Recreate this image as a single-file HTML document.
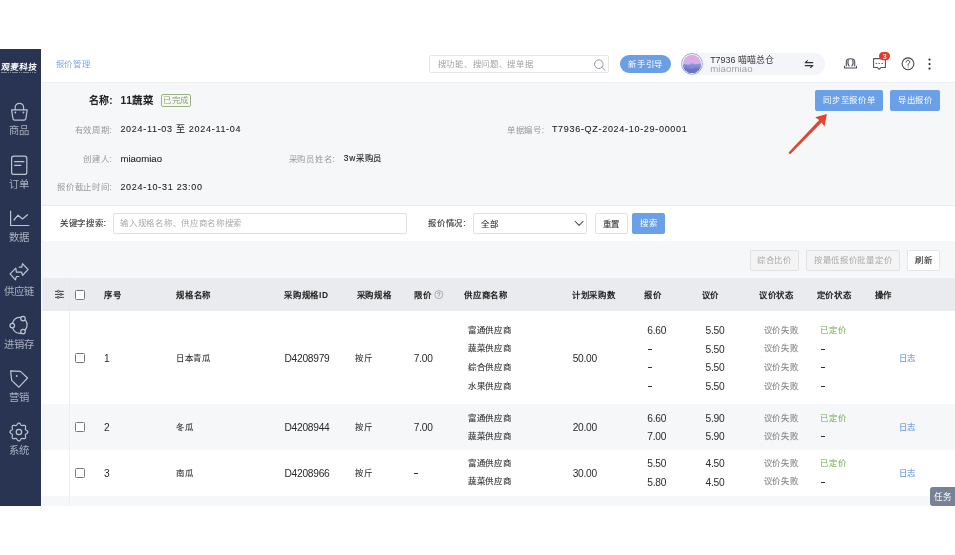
<!DOCTYPE html>
<html lang="zh-CN">
<head>
<meta charset="utf-8">
<style>
*{box-sizing:border-box;margin:0;padding:0}
html,body{width:955px;height:555px;overflow:hidden;background:#fff;font-family:"Liberation Sans",sans-serif;}
#w{position:absolute;left:0;top:0;width:955px;height:555px;will-change:transform;background:#fff}
.a{position:absolute}
.t{position:absolute;white-space:nowrap;line-height:12px;font-size:8.4px;letter-spacing:.7px;color:#333;-webkit-text-stroke:.12px}
.n{font-size:10.2px;letter-spacing:-.25px;padding-top:1.3px;-webkit-text-stroke:0;color:#2a2a2a}
.side{left:0;top:49px;width:41px;height:457px;background:#283452}
.slab{position:absolute;left:-1.4px;width:41px;text-align:center;font-size:10.3px;line-height:12px;color:#abb2bf;white-space:nowrap}
.hdr{left:41px;top:49px;width:914px;height:32px;background:#fff}
.content{left:41px;top:81.6px;width:914px;height:424.4px;background:#f6f7f9;border-top:1px solid #eff0f3}
.btnb{position:absolute;background:#6aa0e8;border-radius:2px;color:#fff;font-size:8.4px;letter-spacing:.7px;text-indent:.7px;line-height:12px;text-align:center;white-space:nowrap}
.box{position:absolute;background:#fff;border:1px solid #e0e3e8;border-radius:2px}
.lbl{color:#999;-webkit-text-stroke:0}
.th{font-weight:bold;color:#222;-webkit-text-stroke:0}
.cb{position:absolute;width:10.2px;height:10px;border:1px solid #75787e;border-radius:1.5px;background:#fff}
.gray{color:#888}
.green{color:#84b968}
.blue{color:#6b9cdc}
</style>
</head>
<body>
<div id="w">
<!-- sidebar -->
<div class="a side"></div>
<div class="t" style="left:1.2px;top:60.8px;font-size:8.5px;font-weight:bold;color:#fff;letter-spacing:.1px;transform:skewX(-6deg);-webkit-text-stroke:0">观麦科技</div>
<div class="a" style="left:0.5px;top:71.6px;width:35.5px;height:1.3px;background:repeating-linear-gradient(90deg,#9aa3b8 0 1.6px,transparent 1.6px 2.2px);opacity:.75"></div>

<svg class="a" style="left:0;top:49px" width="41" height="457" viewBox="0 49 41 457" fill="none" stroke="#bdc4d0" stroke-width="1.2" stroke-linecap="round" stroke-linejoin="round">
  <!-- bag -->
  <path d="M15.2 109.5 V107.5 a4.2 4.2 0 0 1 8.4 0 V109.5"/>
  <path d="M11.6 109.8 H27.2 L25.9 118.4 Q25.7 120.2 24 120.2 H14.8 Q13.1 120.2 12.9 118.4 Z"/>
  <circle cx="15.3" cy="112.5" r="0.9" fill="#bdc4d0" stroke="none"/>
  <circle cx="23.5" cy="112.5" r="0.9" fill="#bdc4d0" stroke="none"/>
  <!-- doc -->
  <rect x="11.6" y="156.2" width="15.2" height="18.2" rx="2.2"/>
  <path d="M14.6 161.6 H24 M14.6 165.4 H20.8"/>
  <!-- chart -->
  <path d="M10.6 211.2 V225.5 H28.8"/>
  <path d="M14 220 L18 215.2 L22.5 219 L27.5 214.7"/>
  <!-- arrows -->
  <path d="M19.2 267.1 H21.8 L22.5 263.6 L28 269.5 L22.6 275.3 L21.6 272.2 H16.4 L15.8 268.2 L10.1 273.9 L15.4 279.9 L16.4 276.5 H18.8"/>
  <!-- cycle -->
  <path d="M20.8 317.4 A8 8 0 0 0 12.6 322.8"/>
  <path d="M12.8 328.4 A8 8 0 0 0 20.8 333.4"/>
  <path d="M25.2 329.8 A8 8 0 0 0 25.6 320.4"/>
  <circle cx="23" cy="318.6" r="2.3"/>
  <circle cx="12.3" cy="325.6" r="2.3"/>
  <circle cx="23" cy="331.6" r="2.3"/>
  <!-- tag -->
  <path d="M10.6 370.8 L20.4 371.4 L27.6 378 L18.9 387.2 L11.7 380.4 Z"/>
  <circle cx="16.7" cy="376" r="0.9" fill="#bdc4d0" stroke="none"/>
  <!-- gear -->
  <path d="M18.90 423.05 L19.25 423.10 L19.59 423.26 L19.91 423.50 L20.20 423.81 L20.46 424.15 L20.70 424.51 L20.92 424.84 L21.13 425.12 L21.36 425.34 L21.60 425.49 L21.87 425.56 L22.18 425.56 L22.54 425.51 L22.93 425.43 L23.34 425.35 L23.77 425.29 L24.20 425.28 L24.59 425.33 L24.94 425.46 L25.23 425.67 L25.44 425.96 L25.57 426.31 L25.62 426.70 L25.61 427.13 L25.55 427.56 L25.47 427.97 L25.39 428.36 L25.34 428.72 L25.34 429.03 L25.41 429.30 L25.56 429.54 L25.78 429.77 L26.06 429.98 L26.39 430.20 L26.75 430.44 L27.09 430.70 L27.40 430.99 L27.64 431.31 L27.80 431.65 L27.85 432.00 L27.80 432.35 L27.64 432.69 L27.40 433.01 L27.09 433.30 L26.75 433.56 L26.39 433.80 L26.06 434.02 L25.78 434.23 L25.56 434.46 L25.41 434.70 L25.34 434.97 L25.34 435.28 L25.39 435.64 L25.47 436.03 L25.55 436.44 L25.61 436.87 L25.62 437.30 L25.57 437.69 L25.44 438.04 L25.23 438.33 L24.94 438.54 L24.59 438.67 L24.20 438.72 L23.77 438.71 L23.34 438.65 L22.93 438.57 L22.54 438.49 L22.18 438.44 L21.87 438.44 L21.60 438.51 L21.36 438.66 L21.13 438.88 L20.92 439.16 L20.70 439.49 L20.46 439.85 L20.20 440.19 L19.91 440.50 L19.59 440.74 L19.25 440.90 L18.90 440.95 L18.55 440.90 L18.21 440.74 L17.89 440.50 L17.60 440.19 L17.34 439.85 L17.10 439.49 L16.88 439.16 L16.67 438.88 L16.44 438.66 L16.20 438.51 L15.93 438.44 L15.62 438.44 L15.26 438.49 L14.87 438.57 L14.46 438.65 L14.03 438.71 L13.60 438.72 L13.21 438.67 L12.86 438.54 L12.57 438.33 L12.36 438.04 L12.23 437.69 L12.18 437.30 L12.19 436.87 L12.25 436.44 L12.33 436.03 L12.41 435.64 L12.46 435.28 L12.46 434.97 L12.39 434.70 L12.24 434.46 L12.02 434.23 L11.74 434.02 L11.41 433.80 L11.05 433.56 L10.71 433.30 L10.40 433.01 L10.16 432.69 L10.00 432.35 L9.95 432.00 L10.00 431.65 L10.16 431.31 L10.40 430.99 L10.71 430.70 L11.05 430.44 L11.41 430.20 L11.74 429.98 L12.02 429.77 L12.24 429.54 L12.39 429.30 L12.46 429.03 L12.46 428.72 L12.41 428.36 L12.33 427.97 L12.25 427.56 L12.19 427.13 L12.18 426.70 L12.23 426.31 L12.36 425.96 L12.57 425.67 L12.86 425.46 L13.21 425.33 L13.60 425.28 L14.03 425.29 L14.46 425.35 L14.87 425.43 L15.26 425.51 L15.62 425.56 L15.93 425.56 L16.20 425.49 L16.44 425.34 L16.67 425.12 L16.88 424.84 L17.10 424.51 L17.34 424.15 L17.60 423.81 L17.89 423.50 L18.21 423.26 L18.55 423.10 Z"/>
  <circle cx="18.9" cy="432" r="2.7"/>
</svg>
<div class="slab" style="top:125.2px">商品</div>
<div class="slab" style="top:178.6px">订单</div>
<div class="slab" style="top:231.8px">数据</div>
<div class="slab" style="top:285.6px">供应链</div>
<div class="slab" style="top:338.9px">进销存</div>
<div class="slab" style="top:392.2px">营销</div>
<div class="slab" style="top:445.4px">系统</div>

<!-- header -->
<div class="a hdr"></div>
<div class="t" style="left:55.5px;top:58px;color:#7da8e4;-webkit-text-stroke:0">报价管理</div>
<div class="box" style="left:429px;top:55px;width:180px;height:18px;border-color:#e4e6ea"></div>
<div class="t" style="left:437.8px;top:58.3px;color:#a3a3a3;-webkit-text-stroke:0">搜功能、搜问题、搜单据</div>
<svg class="a" style="left:592px;top:57px" width="16" height="15" viewBox="0 0 16 15" fill="none" stroke="#8d9097" stroke-width=".95"><circle cx="6.8" cy="7.2" r="4.3"/><path d="M9.9 10.3 L13.2 13.4" stroke-linecap="round"/></svg>
<div class="btnb" style="left:620px;top:55px;width:50.5px;height:18px;border-radius:9px;line-height:18px;background:#6b9fe5">新手引导</div>
<div class="a" style="left:688px;top:52.7px;width:137px;height:22px;border-radius:11px;background:#f4f5f8"></div>
<svg class="a" style="left:660px;top:45px" width="295" height="35" viewBox="660 45 295 35">
  <defs>
    <linearGradient id="sky" x1="0" y1="0" x2="0" y2="1">
      <stop offset="0" stop-color="#e3a6dc"/><stop offset=".35" stop-color="#dcaee6"/><stop offset=".5" stop-color="#c7b4ea"/><stop offset=".62" stop-color="#8f96d8"/><stop offset="1" stop-color="#6a74c0"/>
    </linearGradient>
    <clipPath id="avc"><circle cx="692" cy="63.9" r="9.2"/></clipPath>
  </defs>
  <circle cx="692" cy="63.9" r="10.4" fill="#fff" stroke="#8ea6e2" stroke-width="1"/>
  <circle cx="692" cy="63.9" r="9.2" fill="url(#sky)"/>
  <path clip-path="url(#avc)" d="M681 65.5 L685 64 L688 65 L692 63.2 L696 64.6 L700 63.5 L703 64.8 V75 H681 Z" fill="#7d86cf" opacity=".65"/>
  <path clip-path="url(#avc)" d="M681 69 L686 67.5 L691 69 L696 67.6 L703 69.5 V75 H681 Z" fill="#5f6abb" opacity=".55"/>
  <!-- swap -->
  <g fill="none" stroke="#333" stroke-width="1.1" stroke-linecap="round" stroke-linejoin="round">
    <path d="M805.2 62.6 H812.8 M805.2 62.6 L807.4 60.7"/>
    <path d="M812.8 65.6 H805.2 M812.8 65.6 L810.6 67.5"/>
  </g>
  <!-- people -->
  <g fill="none" stroke="#4a4e56" stroke-width="1.05" stroke-linecap="round" stroke-linejoin="round">
    <path d="M846.3 66 V61.4 C846.3 59.6 848 58.7 850.5 58.7 C853 58.7 854.7 59.6 854.7 61.4 V66"/>
    <path d="M848.3 59.8 C847.6 62 847.9 64.6 849.1 66 M852.7 59.8 C853.4 62 853.1 64.6 851.9 66"/>
    <path d="M844.5 66.3 V68 H856.5 V66.3"/>
  </g>
  <!-- message -->
  <g fill="none" stroke="#50545c" stroke-width="1.05" stroke-linejoin="round">
    <path d="M873.6 58.6 H885.4 V67.4 H881.2 L879.2 69.3 L877.2 67.4 H873.6 Z"/>
  </g>
  <g fill="#50545c"><rect x="875.6" y="62.9" width="1.6" height=".9"/><rect x="878.5" y="62.9" width="1.6" height=".9"/><rect x="881.4" y="62.9" width="1.6" height=".9"/></g>
  <rect x="879" y="51.9" width="11" height="8.3" rx="4.15" fill="#e5392b"/>
  <text x="884.5" y="58.9" font-size="7.6" fill="#fff" text-anchor="middle" font-family="Liberation Sans">3</text>
  <!-- help -->
  <circle cx="908" cy="63.8" r="5.9" fill="none" stroke="#3c3f45" stroke-width="1.05"/>
  <path d="M906.2 62.1 C906.2 60.9 907 60.3 908 60.3 C909.1 60.3 909.8 61 909.8 61.9 C909.8 63.2 908.1 63.3 908.1 64.8 V65.3" fill="none" stroke="#3c3f45" stroke-width="1" stroke-linecap="round"/>
  <circle cx="908.1" cy="67" r=".55" fill="#3c3f45"/>
  <!-- kebab -->
  <g fill="#2a2d33"><circle cx="929.5" cy="59.5" r="1.1"/><circle cx="929.5" cy="64.1" r="1.1"/><circle cx="929.5" cy="68.6" r="1.1"/></g>
</svg>

<div class="t" style="left:710.2px;top:54.4px;font-size:8.9px;letter-spacing:0;color:#333;-webkit-text-stroke:0">T7936 喵喵总仓</div>
<div class="t" style="left:710.2px;top:62.5px;font-size:9.6px;letter-spacing:.1px;color:#a3a3a3;-webkit-text-stroke:0">miaomiao</div>
<!-- content -->
<div class="a content"></div>
<div class="a" style="left:41px;top:81px;width:1px;height:425px;background:#fff"></div>

<!-- info -->
<div class="t" style="left:60px;width:52.5px;text-align:right;top:94.5px;font-size:10px;letter-spacing:0;font-weight:bold;color:#222;-webkit-text-stroke:0">名称:</div>
<div class="t" style="left:120.5px;top:94.5px;font-size:10.3px;letter-spacing:.5px;font-weight:bold;color:#222;-webkit-text-stroke:0">11蔬菜</div>
<div class="a" style="left:160.6px;top:94.4px;width:30px;height:12.2px;border:1px solid #9bb08a;background:#f5f9f0;border-radius:2px"></div>
<div class="t" style="left:163px;top:94.4px;color:#8aa079;-webkit-text-stroke:0">已完成</div>

<div class="t lbl" style="left:40px;width:72.6px;text-align:right;top:123.5px">有效周期:</div>
<div class="t" style="left:120.4px;top:122.6px;font-size:9px;letter-spacing:.7px;color:#222;-webkit-text-stroke:.08px">2024-11-03 至 2024-11-04</div>
<div class="t lbl" style="left:40px;width:72.6px;text-align:right;top:152.5px">创建人:</div>
<div class="t" style="left:120.4px;top:152.5px;font-size:9.6px;letter-spacing:0;color:#222;-webkit-text-stroke:.08px">miaomiao</div>
<div class="t lbl" style="left:40px;width:72.6px;text-align:right;top:181.3px">报价截止时间:</div>
<div class="t" style="left:120.4px;top:180.8px;font-size:9px;letter-spacing:.7px;color:#222;-webkit-text-stroke:.08px">2024-10-31 23:00</div>

<div class="t lbl" style="left:260px;width:75.3px;text-align:right;top:152.5px">采购员姓名:</div>
<div class="t" style="left:343.8px;top:152.3px;color:#222">3w采购员</div>
<div class="t lbl" style="left:480px;width:64.8px;text-align:right;top:123.5px">单据编号:</div>
<div class="t" style="left:551.9px;top:122.6px;font-size:9px;letter-spacing:.7px;color:#222;-webkit-text-stroke:.08px">T7936-QZ-2024-10-29-00001</div>

<div class="btnb" style="left:815.2px;top:89.7px;width:67.4px;height:21.1px;line-height:21px">同步至报价单</div>
<div class="btnb" style="left:890px;top:89.7px;width:50px;height:21.1px;line-height:21px">导出报价</div>

<svg class="a" style="left:780px;top:105px" width="60" height="55" viewBox="780 105 60 55">
  <path d="M788.6 152.4 L819.2 120.0 L815.2 117.3 L826.9 113.9 L824.5 126.4 L821.6 122.4 L790.4 154.0 Q789.2 154.2 788.6 152.4 Z" fill="#e5432c"/>
</svg>

<!-- search section -->
<div class="a" style="left:42px;top:204.6px;width:913px;height:36.8px;background:#fff;border-top:1px solid #eaecf0"></div>
<div class="t" style="left:60px;top:217px;color:#333">关键字搜索:</div>
<div class="box" style="left:113.2px;top:213.2px;width:294.2px;height:21px;border-color:#dfe2e7"></div>
<div class="t" style="left:120.4px;top:217.2px;color:#a8a8a8;-webkit-text-stroke:0">输入规格名称、供应商名称搜索</div>
<div class="t" style="left:428.4px;top:217px;color:#333">报价情况:</div>
<div class="box" style="left:472.7px;top:213.2px;width:114.7px;height:21px;border-color:#dfe2e7"></div>
<div class="t" style="left:480.9px;top:217.7px;color:#333">全部</div>
<svg class="a" style="left:573px;top:219px" width="12" height="9" viewBox="0 0 12 9" fill="none" stroke="#555" stroke-width="1.1" stroke-linecap="round" stroke-linejoin="round"><path d="M2.2 2.4 L6.1 6.4 L10 2.4"/></svg>
<div class="box" style="left:595.2px;top:213.2px;width:32.6px;height:21px;border-color:#dfe2e7"></div>
<div class="t" style="left:595.2px;width:32.6px;text-align:center;top:217.5px;color:#333">重置</div>
<div class="btnb" style="left:631.9px;top:213.2px;width:32.7px;height:20.8px;line-height:21px">搜索</div>

<!-- actions -->
<div class="box" style="left:749.5px;top:249.5px;width:49.5px;height:21px;background:#f4f4f5;border-color:#e2e2e4"></div>
<div class="t" style="left:749.5px;width:49.5px;text-align:center;top:254px;color:#a9a9a9;-webkit-text-stroke:0">综合比价</div>
<div class="box" style="left:806.4px;top:249.5px;width:93.5px;height:21px;background:#f4f4f5;border-color:#e2e2e4"></div>
<div class="t" style="left:806.4px;width:93.5px;text-align:center;top:254px;color:#a9a9a9;-webkit-text-stroke:0">按最低报价批量定价</div>
<div class="box" style="left:907.3px;top:249.5px;width:32.7px;height:21px;border-color:#e6e6e8"></div>
<div class="t" style="left:907.3px;width:32.7px;text-align:center;top:254px;color:#333">刷新</div>

<!-- table header -->
<div class="a" style="left:42px;top:278.3px;width:913px;height:33px;background:#e9ebef"></div>
<svg class="a" style="left:54px;top:289px" width="11" height="11" viewBox="0 0 11 11" fill="none" stroke="#3a3d42" stroke-width="1"><path d="M1 2.4 H9.8 M1 5.4 H9.8 M1 8.4 H9.8"/><circle cx="4.4" cy="2.4" r="1" fill="#fff"/><circle cx="6.9" cy="5.4" r="1" fill="#fff"/><circle cx="4.2" cy="8.4" r="1" fill="#fff"/></svg>
<div class="a" style="left:69px;top:278.3px;width:1px;height:227.7px;background:#e6e8ec"></div>
<div class="cb" style="left:75.1px;top:289.8px"></div>
<div class="t th" style="left:104.2px;top:289px">序号</div>
<div class="t th" style="left:176.4px;top:289px">规格名称</div>
<div class="t th" style="left:284.2px;top:289px">采购规格ID</div>
<div class="t th" style="left:356.5px;top:289px">采购规格</div>
<div class="t th" style="left:414px;top:289px">限价</div>
<svg class="a" style="left:434px;top:290px" width="10" height="10" viewBox="0 0 10 10" fill="none" stroke="#9a9a9a" stroke-width=".8"><circle cx="4.8" cy="4.6" r="4"/><path d="M3.6 3.7 C3.6 2.9 4.2 2.5 4.8 2.5 C5.5 2.5 6 3 6 3.6 C6 4.4 4.9 4.5 4.9 5.5" stroke-linecap="round" stroke-width=".9" stroke="#8a8a8a"/><circle cx="4.9" cy="6.8" r=".45" fill="#8a8a8a" stroke="none"/></svg>
<div class="t th" style="left:464.2px;top:289px">供应商名称</div>
<div class="t th" style="left:572px;top:289px">计划采购数</div>
<div class="t th" style="left:644.3px;top:289px">报价</div>
<div class="t th" style="left:701.6px;top:289px">议价</div>
<div class="t th" style="left:759.1px;top:289px">议价状态</div>
<div class="t th" style="left:816.6px;top:289px">定价状态</div>
<div class="t th" style="left:874.7px;top:289px">操作</div>

<!-- rows -->
<div class="a" style="left:42px;top:311.3px;width:913px;height:92.4px;background:#fff"></div>
<div class="a" style="left:42px;top:403.7px;width:913px;height:45.8px;background:#f6f7f9"></div>
<div class="a" style="left:42px;top:449.5px;width:913px;height:46.5px;background:#fff"></div>
<div class="a" style="left:42px;top:496px;width:913px;height:10px;background:#f6f7f9"></div>
<div class="a" style="left:69px;top:311.3px;width:1px;height:194.7px;background:#eceef1"></div>

<div id="rows">
<div class="cb" style="left:75.1px;top:352.5px"></div>
<div class="t n" style="left:104px;top:351.5px;">1</div>
<div class="t " style="left:175.9px;top:351.5px;">日本青瓜</div>
<div class="t n" style="left:284.5px;top:351.5px;">D4208979</div>
<div class="t " style="left:355.3px;top:351.5px;">按斤</div>
<div class="t n" style="left:413.8px;top:351.5px;">7.00</div>
<div class="t n" style="left:572.7px;top:351.5px;">50.00</div>
<div class="t blue" style="left:898.7px;top:351.5px;">日志</div>
<div class="t " style="left:468px;top:323.5px;">富通供应商</div>
<div class="t n" style="left:647.3px;top:323.5px;">6.60</div>
<div class="t n" style="left:705.5px;top:323.5px;">5.50</div>
<div class="t gray" style="left:763.6px;top:323.5px;">议价失败</div>
<div class="t green" style="left:820.3px;top:323.5px;">已定价</div>
<div class="t " style="left:468px;top:342.3px;">蔬菜供应商</div>
<div class="a" style="left:647.6px;top:348.7px;width:4.4px;height:1.1px;background:#333"></div>
<div class="t n" style="left:705.5px;top:342.3px;">5.50</div>
<div class="t gray" style="left:763.6px;top:342.3px;">议价失败</div>
<div class="a" style="left:820.6px;top:348.7px;width:4.4px;height:1.1px;background:#333"></div>
<div class="t " style="left:468px;top:361.0px;">综合供应商</div>
<div class="a" style="left:647.6px;top:367.4px;width:4.4px;height:1.1px;background:#333"></div>
<div class="t n" style="left:705.5px;top:361.0px;">5.50</div>
<div class="t gray" style="left:763.6px;top:361.0px;">议价失败</div>
<div class="a" style="left:820.6px;top:367.4px;width:4.4px;height:1.1px;background:#333"></div>
<div class="t " style="left:468px;top:379.5px;">水果供应商</div>
<div class="a" style="left:647.6px;top:385.9px;width:4.4px;height:1.1px;background:#333"></div>
<div class="t n" style="left:705.5px;top:379.5px;">5.50</div>
<div class="t gray" style="left:763.6px;top:379.5px;">议价失败</div>
<div class="a" style="left:820.6px;top:385.9px;width:4.4px;height:1.1px;background:#333"></div>
<div class="cb" style="left:75.1px;top:421.7px"></div>
<div class="t n" style="left:104px;top:420.7px;">2</div>
<div class="t " style="left:175.9px;top:420.7px;">冬瓜</div>
<div class="t n" style="left:284.5px;top:420.7px;">D4208944</div>
<div class="t " style="left:355.3px;top:420.7px;">按斤</div>
<div class="t n" style="left:413.8px;top:420.7px;">7.00</div>
<div class="t n" style="left:572.7px;top:420.7px;">20.00</div>
<div class="t blue" style="left:898.7px;top:420.7px;">日志</div>
<div class="t " style="left:468px;top:411.6px;">富通供应商</div>
<div class="t n" style="left:647.3px;top:411.6px;">6.60</div>
<div class="t n" style="left:705.5px;top:411.6px;">5.90</div>
<div class="t gray" style="left:763.6px;top:411.6px;">议价失败</div>
<div class="t green" style="left:820.3px;top:411.6px;">已定价</div>
<div class="t " style="left:468px;top:429.8px;">蔬菜供应商</div>
<div class="t n" style="left:647.3px;top:429.8px;">7.00</div>
<div class="t n" style="left:705.5px;top:429.8px;">5.90</div>
<div class="t gray" style="left:763.6px;top:429.8px;">议价失败</div>
<div class="a" style="left:820.6px;top:436.2px;width:4.4px;height:1.1px;background:#333"></div>
<div class="cb" style="left:75.1px;top:467.6px"></div>
<div class="t n" style="left:104px;top:466.6px;">3</div>
<div class="t " style="left:175.9px;top:466.6px;">南瓜</div>
<div class="t n" style="left:284.5px;top:466.6px;">D4208966</div>
<div class="t " style="left:355.3px;top:466.6px;">按斤</div>
<div class="a" style="left:414.1px;top:473.0px;width:4.4px;height:1.1px;background:#333"></div>
<div class="t n" style="left:572.7px;top:466.6px;">30.00</div>
<div class="t blue" style="left:898.7px;top:466.6px;">日志</div>
<div class="t " style="left:468px;top:457.2px;">富通供应商</div>
<div class="t n" style="left:647.3px;top:457.2px;">5.50</div>
<div class="t n" style="left:705.5px;top:457.2px;">4.50</div>
<div class="t gray" style="left:763.6px;top:457.2px;">议价失败</div>
<div class="t green" style="left:820.3px;top:457.2px;">已定价</div>
<div class="t " style="left:468px;top:475.4px;">蔬菜供应商</div>
<div class="t n" style="left:647.3px;top:475.4px;">5.80</div>
<div class="t n" style="left:705.5px;top:475.4px;">4.50</div>
<div class="t gray" style="left:763.6px;top:475.4px;">议价失败</div>
<div class="a" style="left:820.6px;top:481.8px;width:4.4px;height:1.1px;background:#333"></div>
</div>

<!-- task tab -->
<div class="a" style="left:930px;top:487.4px;width:25px;height:18.3px;background:#788296;border-radius:3px 0 0 3px"></div>
<div class="t" style="left:933.8px;top:490.6px;color:#fff;font-size:8.6px;letter-spacing:.4px;-webkit-text-stroke:0">任务</div>
</div>
</body>
</html>
